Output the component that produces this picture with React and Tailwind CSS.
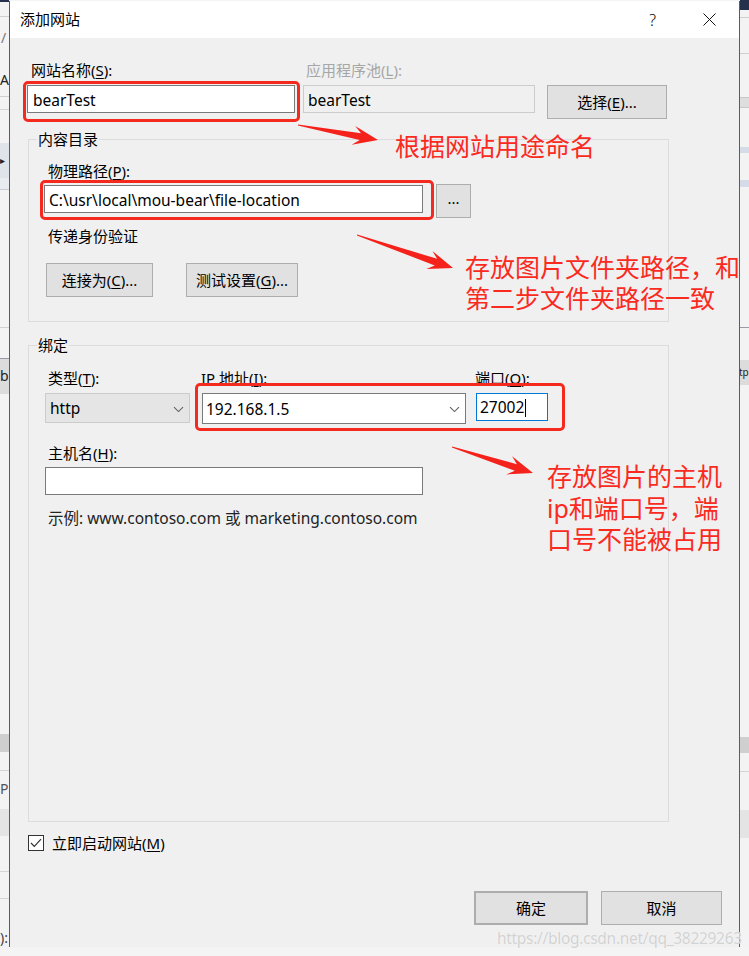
import React from "react";

const FONT = "font-['Segoe_UI','Noto_Sans','Noto_Sans_CJK_SC',sans-serif]";

function arrowPts(tx, ty, px, py, headLen = 25, headW = 9.5, shaftW = 3.5) {
  const dx = px - tx;
  const dy = py - ty;
  const L = Math.hypot(dx, dy);
  const ux = dx / L;
  const uy = dy / L;
  const nx = -uy;
  const ny = ux;
  const bx = px - ux * headLen;
  const by = py - uy * headLen;
  const cx = px - ux * headLen * 0.72;
  const cy = py - uy * headLen * 0.72;
  const pts = [
    [tx - nx * 0.4, ty - ny * 0.4],
    [tx + nx * 0.4, ty + ny * 0.4],
    [cx + nx * shaftW, cy + ny * shaftW],
    [bx + nx * headW, by + ny * headW],
    [px, py],
    [bx - nx * headW, by - ny * headW],
    [cx - nx * shaftW, cy - ny * shaftW],
  ];
  return pts.map((p) => p.map((v) => v.toFixed(1)).join(",")).join(" ");
}

function Chevron() {
  return (
    <svg width="11" height="7" viewBox="0 0 11 7" className="shrink-0">
      <path d="M1 1.2 L5.5 5.6 L10 1.2" fill="none" stroke="#606060" strokeWidth="1.1" />
    </svg>
  );
}

function Btn({ children, className = "" }) {
  return (
    <div
      className={`flex h-[34px] items-center justify-center border border-[#adadad] bg-[#e1e1e1] text-[15px] text-black ${className}`}
    >
      {children}
    </div>
  );
}

function Label({ children, className = "", color = "text-black" }) {
  return (
    <div className={`h-[18px] whitespace-nowrap text-[15px] leading-[18px] ${color} ${className}`}>{children}</div>
  );
}

function U({ children }) {
  return <span className="underline underline-offset-2">{children}</span>;
}

function Group({ title, className = "", children }) {
  return (
    <div className={`ml-[18px] w-[641px] border border-[#dcdcdc] ${className}`}>
      <div className="-mt-[10px] ml-[8px] w-fit bg-[#f0f0f0] px-[1px] text-[15px] leading-[18px] text-black">{title}</div>
      {children}
    </div>
  );
}

function LeftStrip() {
  return (
    <div className="flex w-[9px] shrink-0 flex-col bg-[#f3f3f3] text-[14px] leading-[18px] text-[#222]">
      <div className="h-[2px] bg-[#25314d]" />
      <div className="h-[15px] border-b border-[#cfcfcf]" />
      <div className="h-[33px] pl-[1px] pt-[12px] text-[#777]">/</div>
      <div className="h-[47px] border-b border-[#cfcfcf] pt-[21px]">A</div>
      <div className="h-[13px] border-b border-[#d6d6d6]" />
      <div className="h-[33px]" />
      <div className="h-[35px] bg-[#dfe3ea] pt-[8px] text-[10px]">▸</div>
      <div className="h-[12px] border-b border-[#c9ccd2] bg-[#e8ebf0]" />
      <div className="h-[138px] border-b border-[#d0d0d0]" />
      <div className="h-[30px]" />
      <div className="h-[36px] border-t border-[#9a9aa8] bg-[#dcdcdc] pt-[8px]">b</div>
      <div className="h-[341px]" />
      <div className="h-[18px] bg-[#cfcfcf]" />
      <div className="h-[19px] border-b border-[#d3d3d3]" />
      <div className="h-[38px] pt-[9px] text-[#555]">P</div>
      <div className="h-[27px] bg-[#e4e4e4]" />
      <div className="h-[36px] border-b border-[#d6d6d6]" />
      <div className="h-[27px] border-b border-[#d6d6d6]" />
      <div className="h-[30px]" />
      <div className="text-[#444]">):</div>
    </div>
  );
}

function RightStrip() {
  return (
    <div className="flex w-[9px] shrink-0 flex-col overflow-hidden bg-[#f3f3f3] text-[14px] leading-[18px] text-[#222]">
      <div className="h-[10px] bg-[#25314d]" />
      <div className="h-[8px] border-b border-[#cfcfcf]" />
      <div className="h-[36px] border-b border-[#cfcfcf]" />
      <div className="h-[43px]" />
      <div className="h-[11px] border-y border-[#c8c8c8] bg-[#dedede]" />
      <div className="h-[39px]" />
      <div className="h-[6px] bg-[#d5dce8]" />
      <div className="h-[27px]" />
      <div className="h-[7px] bg-[#d5dce8]" />
      <div className="h-[141px] border-b border-[#9a9aa8]" />
      <div className="h-[32px]" />
      <div className="h-[25px] bg-[#dcdcdc] pt-[3px] text-[10px]">
        <span className="-ml-[1px]">tp</span>
      </div>
      <div className="h-[352px]" />
      <div className="h-[16px] bg-[#cfcfcf]" />
      <div className="h-[19px] border-b border-[#d3d3d3]" />
      <div className="h-[38px]" />
      <div className="h-[28px] bg-[#e4e4e4]" />
    </div>
  );
}

export default function App() {
  return (
    <div className={`relative h-[956px] w-[749px] overflow-hidden bg-[#f4f4f4] ${FONT}`}>
      <div className="flex h-[947px]">
        <LeftStrip />
        <div className="mt-[1px] flex w-[731px] shrink-0 flex-col border-x border-[#5c5c5c] bg-[#f0f0f0]">
          {/* title bar */}
          <div className="flex h-[37px] shrink-0 items-center bg-white pl-[10px] text-[15px] text-black">
            <span className="-mt-[1px]">添加网站</span>
            <span className="ml-auto mr-[47px] text-[16px] font-light">?</span>
            <svg width="13" height="13" viewBox="0 0 13 13" className="mr-[23px]">
              <path d="M0.5 0.5 L12.5 12.5 M12.5 0.5 L0.5 12.5" stroke="#111" strokeWidth="1" />
            </svg>
          </div>

          {/* body */}
          <div className="flex flex-1 flex-col pt-[23px]">
            <div className="flex items-start pl-[17px]">
              <div className="w-[268px]">
                <Label className="pl-[4px]">
                  网站名称(<U>S</U>):
                </Label>
                <div className="mt-[6px] flex h-[28px] items-center border border-[#7a7a7a] bg-white pl-[5px] pt-[3px] text-[15.5px]">
                  bearTest
                </div>
              </div>
              <div className="ml-[8px] w-[232px]">
                <Label className="pl-[3px]" color="text-[#a6a6a6]">
                  应用程序池(<U>L</U>):
                </Label>
                <div className="mt-[6px] flex h-[28px] items-center border border-[#cccccc] bg-[#f0f0f0] pl-[4px] pt-[3px] text-[15.5px]">
                  bearTest
                </div>
              </div>
              <Btn className="ml-[12px] mt-[24px] w-[120px]">
                选择(<U>E</U>)...
              </Btn>
            </div>

            <Group title="内容目录" className="mt-[20px] h-[183px]">
              <Label className="mt-[14px] pl-[19px]">
                物理路径(<U>P</U>):
              </Label>
              <div className="mt-[4px] flex items-start pl-[15px]">
                <div className="mt-[1px] flex h-[28px] w-[379px] items-center border border-[#7a7a7a] bg-white pl-[4px] pt-[3px] text-[15.5px]">
                  C:\usr\local\mou-bear\file-location
                </div>
                <Btn className="ml-[13px] w-[35px] pb-[6px]">...</Btn>
              </div>
              <Label className="mt-[9px] pl-[19px]">传递身份验证</Label>
              <div className="mt-[18px] flex pl-[17px]">
                <Btn className="w-[107px]">
                  连接为(<U>C</U>)...
                </Btn>
                <Btn className="ml-[33px] w-[112px]">
                  测试设置(<U>G</U>)...
                </Btn>
              </div>
            </Group>

            <Group title="绑定" className="mt-[23px] h-[477px]">
              <div className="mt-[15px] flex pl-[16px]">
                <div className="w-[145px]">
                  <Label className="pl-[3px]">
                    类型(<U>T</U>):
                  </Label>
                  <div className="mt-[6px] flex h-[30px] items-center justify-between border border-[#cccccc] bg-[#e5e5e5] pl-[4px] pr-[5px] pt-[2px] text-[15.5px]">
                    http
                    <Chevron />
                  </div>
                </div>
                <div className="ml-[12px] w-[264px]">
                  <Label className="-ml-[1px]">
                    IP 地址(<U>I</U>):
                  </Label>
                  <div className="mt-[6px] flex h-[31px] items-center justify-between border border-[#7a7a7a] bg-white pl-[3px] pr-[5px] pt-[2px] text-[15.5px]">
                    192.168.1.5
                    <Chevron />
                  </div>
                </div>
                <div className="ml-[10px] w-[72px]">
                  <Label className="-ml-[1px]">
                    端口(<U>O</U>):
                  </Label>
                  <div className="mt-[6px] flex h-[28px] items-center border border-[#0078d7] bg-white pl-[3px] pt-[2px] text-[15.5px]">
                    27002
                    <span className="ml-[1px] h-[18px] w-[1px] bg-black" />
                  </div>
                </div>
              </div>
              <Label className="mt-[20px] pl-[19px]">
                主机名(<U>H</U>):
              </Label>
              <div className="ml-[16px] mt-[5px] h-[28px] w-[378px] border border-[#7a7a7a] bg-white" />
              <div className="mt-[14px] whitespace-nowrap pl-[19px] text-[15.5px] leading-[18px] text-[#222]">
                示例: www.contoso.com 或 marketing.contoso.com
              </div>
            </Group>

            <div className="ml-[18px] mt-[12px] flex h-[18px] items-center">
              <div className="flex h-[16px] w-[16px] items-center justify-center border border-[#333] bg-white">
                <svg width="12" height="10" viewBox="0 0 12 10">
                  <path d="M1 5 L4.3 8.4 L11 1.2" fill="none" stroke="#333" strokeWidth="1.2" />
                </svg>
              </div>
              <span className="ml-[8px] text-[15px] leading-[18px] text-black">
                立即启动网站(<U>M</U>)
              </span>
            </div>

            <div className="mt-[39px] flex justify-end pr-[17px]">
              <Btn className="w-[114px] border-2 border-[#0078d7]">确定</Btn>
              <Btn className="ml-[13px] w-[121px]">取消</Btn>
            </div>
          </div>
        </div>
        <RightStrip />
      </div>

      {/* annotations */}
      <div className="pointer-events-none absolute left-[23px] top-[81px] h-[41px] w-[277px] rounded-[5px] border-[3px] border-[#f52a1f]" />
      <div className="pointer-events-none absolute left-[40px] top-[180px] h-[40px] w-[394px] rounded-[5px] border-[3px] border-[#f52a1f]" />
      <div className="pointer-events-none absolute left-[195px] top-[383px] h-[48px] w-[370px] rounded-[5px] border-[3px] border-[#f52a1f]" />

      <svg className="pointer-events-none absolute left-0 top-0" width="749" height="956">
        <polygon points={arrowPts(298, 125, 378, 140)} fill="#f5221b" />
        <polygon points={arrowPts(357, 235, 453, 268)} fill="#f5221b" />
        <polygon points={arrowPts(452, 447, 533, 473)} fill="#f5221b" />
      </svg>

      <div className="pointer-events-none absolute left-[395px] top-[133px] whitespace-nowrap text-[25px] leading-[26px] text-[#fa2a1e]">
        根据网站用途命名
      </div>
      <div className="pointer-events-none absolute left-[465px] top-[252px] whitespace-nowrap text-[25px] leading-[31px] text-[#fa2a1e]">
        存放图片文件夹路径，和
        <br />
        第二步文件夹路径一致
      </div>
      <div className="pointer-events-none absolute left-[547px] top-[461px] whitespace-nowrap text-[25px] leading-[31.5px] text-[#fa2a1e]">
        存放图片的主机
        <br />
        ip和端口号，端
        <br />
        口号不能被占用
      </div>
      <div className="pointer-events-none absolute left-[497px] top-[928px] whitespace-nowrap text-[15.5px] leading-[20px] tracking-[-0.3px] text-[#d2d2d2] [text-shadow:0_0_1px_#fff]">
        https://blog.csdn.net/qq_38229263
      </div>
    </div>
  );
}
